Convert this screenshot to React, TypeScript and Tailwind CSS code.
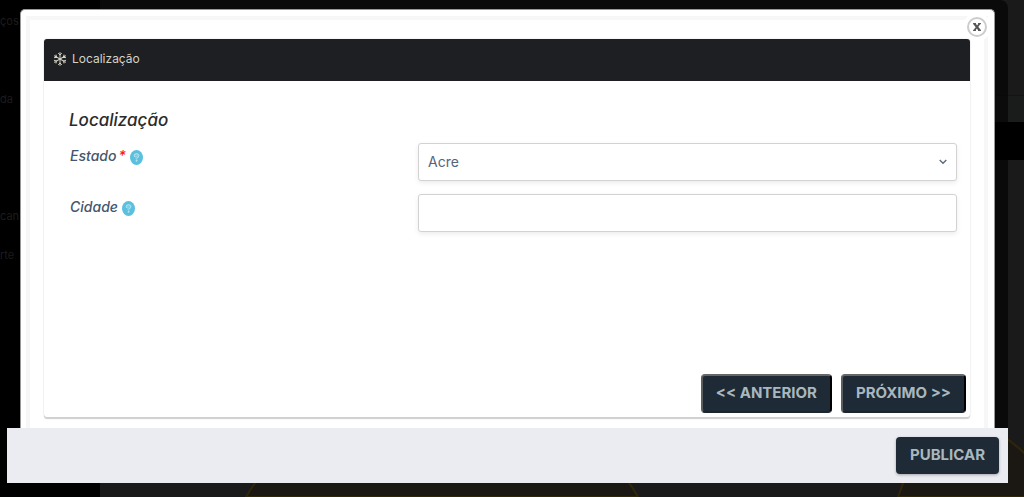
import { useState } from "react"

function SnowflakeIcon() {
    return (
        <svg className="h-[14px] w-[14px]" viewBox="0 0 14 14" fill="none" stroke="#d5d2c4" strokeWidth="1" aria-hidden="true">
            {[0, 60, 120, 180, 240, 300].map((angle) => (
                <path key={angle} transform={`rotate(${angle} 7 7)`} d="M7 7V.2M5.2 1.2 7 3 8.8 1.2" />
            ))}
        </svg>
    )
}

function HelpIcon() {
    return (
        <svg className="mt-1 h-[15px] w-[13px]" viewBox="0 0 13 15" aria-hidden="true">
            <ellipse cx="6.5" cy="7.5" rx="6.5" ry="7.5" fill="#5bc0de" />
            <g fill="none" strokeLinecap="round">
                <path d="M4.7 6V5.2Q5 4.2 6.6 4.2 8.4 4.2 8.4 5.8 8.4 6.8 6.6 7.5V8.6M6.6 10.6V10.7" stroke="#b5e2f0" strokeWidth="1.9" />
                <path d="M4.9 5.7Q5.2 4.6 6.6 4.6 8 4.6 8 5.8 8 6.6 6.6 7.4V8.4" stroke="#5bc0de" strokeWidth=".7" />
            </g>
        </svg>
    )
}

function Backdrop() {
    const menuItems = [
        { label: "ços", className: "top-[11px]" },
        { label: "da", className: "top-[89px]" },
        { label: "can", className: "top-[206px]" },
        { label: "rte", className: "top-[245px]" },
    ]

    return (
        <div className="absolute inset-0 flex overflow-hidden bg-[#1a1a1a]" aria-hidden="true">
            <div className="w-[100px] bg-black text-[11px] leading-5 text-[#1c1c1c]">
                {menuItems.map((item) => (
                    <span key={item.label} className={`absolute left-0 ${item.className}`}>
                        {item.label}
                    </span>
                ))}
            </div>
            <div className="flex-1 pt-[95px]">
                <div className="h-[27px] border-t border-[#141414] bg-[#1a1c1b]" />
                <div className="h-[38px] bg-black" />
            </div>
            <svg className="absolute right-0 bottom-0 h-[130px] w-[784px]" viewBox="0 0 784 130" fill="#1b1813" stroke="#30260a" strokeWidth="2">
                <path d="M6 130Q45 64 115 50H290Q360 64 398 130Z" />
                <path d="M658 130Q674 80 714 60 750 50 790 92V130Z" />
            </svg>
            <div className="absolute top-0 right-4 bottom-[69px] left-[100px] rounded-tr-[8px] bg-black/60" />
        </div>
    )
}

function FieldLabel({ id, text, required }: { id: string; text: string; required?: boolean }) {
    return (
        <div className="flex items-start gap-1 pt-[3px] pl-[1px]">
            <label htmlFor={id} className="text-sm leading-5 font-medium text-[#44556c] italic">
                {text}
                {required && <span className="ml-[2px] text-[#ff1a1a]">*</span>}
            </label>
            <HelpIcon />
        </div>
    )
}

const fieldClass =
    "h-[38px] w-full appearance-none rounded-[3px] border border-[#d2d2d2] bg-white px-[9px] text-sm text-[#54657a] shadow-[0_2px_5px_rgba(0,0,0,0.08)]"

const stepButtonClass =
    "h-[39px] rounded-[4px] border-2 border-t-[#666664] border-r-black border-b-[#1c252d] border-l-[#5b5e5e] bg-[#1e2a35] px-[13px] text-[15px] font-bold text-[#a9b7bf]"

export default function App() {
    const [state, setState] = useState("Acre")
    const [city, setCity] = useState("")

    return (
        <div className="relative flex min-h-screen flex-col pb-[14px] font-['Inter','Liberation_Sans',sans-serif]">
            <Backdrop />

            <div role="dialog" aria-label="Localização" className="relative mr-4 ml-[7px] flex flex-1 flex-col">
                <div className="flex flex-1 flex-col px-[13px] pt-[9px]">
                    <div className="relative flex flex-1 flex-col rounded-t-[5px] border border-b-0 border-[#999] bg-white pt-[6px] pr-[6px] pl-[5px]">
                        <button
                            type="button"
                            aria-label="Fechar"
                            className="absolute top-[7px] right-[7px] flex h-5 w-5 items-center justify-center rounded-full border-2 border-[#ccc] bg-white shadow-[0_0_0_4px_#fff]"
                        >
                            <svg className="h-2 w-2" viewBox="0 0 8 8" stroke="#555" fill="none" aria-hidden="true">
                                <path d="M1.2.5 6.8 7.5" strokeWidth="2.2" />
                                <path d="M6.8.5 1.2 7.5" strokeWidth="1.8" />
                                <path d="M0 .6H3M5 .6H8M0 7.4H3M5 7.4H8" strokeWidth="1" />
                            </svg>
                        </button>

                        <div className="flex flex-1 flex-col border-4 border-b-0 border-[#f7f7f7] px-[14px] pt-[19px] pb-[11px]">
                            <section className="flex flex-1 flex-col rounded-[3px] shadow-[0_0_2px_#ddd,0_2px_1px_#ccc]">
                                <header className="flex h-[42px] items-center gap-[5px] rounded-t-[3px] bg-[#1e1f23] px-[9px] pb-[3px] text-xs text-[#d5d2c4]">
                                    <SnowflakeIcon />
                                    <span>Localização</span>
                                </header>

                                <form className="flex flex-1 flex-col pt-[27px] pr-[13px] pl-[25px]" onSubmit={(e) => e.preventDefault()}>
                                    <h2 className="mb-[11px] text-[17px] leading-6 font-medium text-[#2b2b2b] italic">Localização</h2>

                                    <div className="grid grid-cols-[39.3%_1fr] gap-y-[13px]">
                                        <FieldLabel id="estado" text="Estado" required />
                                        <div className="relative">
                                            <select id="estado" className={fieldClass} value={state} onChange={(e) => setState(e.target.value)}>
                                                <option>Acre</option>
                                            </select>
                                            <svg className="pointer-events-none absolute top-4 right-[10px] h-[6px] w-2" viewBox="0 0 8 6" fill="none" stroke="#5f6b78" strokeWidth="1.4" aria-hidden="true">
                                                <path d="m.7 1 3.3 3.3L7.3 1" />
                                            </svg>
                                        </div>

                                        <FieldLabel id="cidade" text="Cidade" />
                                        <input id="cidade" type="text" className={fieldClass} value={city} onChange={(e) => setCity(e.target.value)} />
                                    </div>

                                    <div className="mt-auto -mr-[9px] flex justify-end gap-[9px] pb-1">
                                        <button type="button" className={stepButtonClass}>
                                            &lt;&lt; ANTERIOR
                                        </button>
                                        <button type="button" className={stepButtonClass}>
                                            PRÓXIMO &gt;&gt;
                                        </button>
                                    </div>
                                </form>
                            </section>
                        </div>
                    </div>
                </div>

                <footer className="flex justify-end bg-[#ebecf1] px-[9px] py-[9px]">
                    <button
                        type="button"
                        className="h-[37px] rounded-[4px] bg-[#1e2a35] px-[14px] text-[15px] font-bold text-[#a9b7bf] shadow-[0_1px_3px_rgba(0,0,0,0.3)]"
                    >
                        PUBLICAR
                    </button>
                </footer>
            </div>
        </div>
    )
}
